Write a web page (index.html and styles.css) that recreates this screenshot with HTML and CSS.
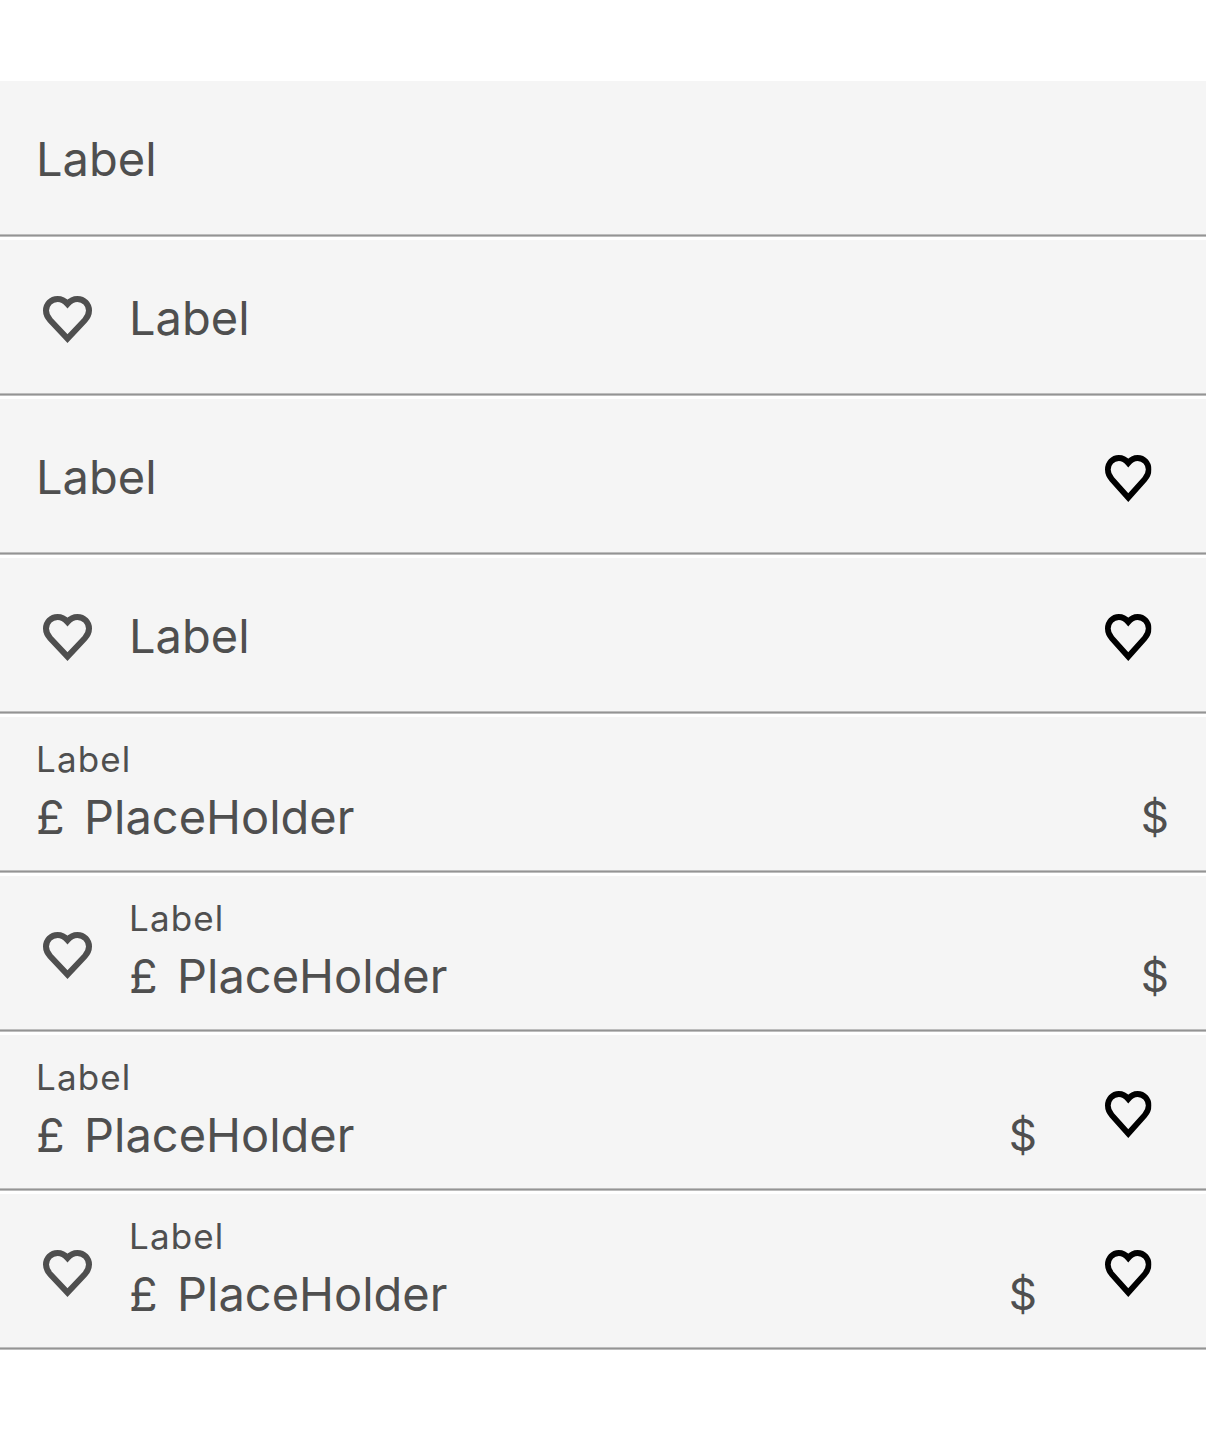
FILE: index.html
```
<!DOCTYPE html>
<html lang="en">
<head>
<meta charset="utf-8">
<title>Text fields</title>
<link rel="stylesheet" href="styles.css">
</head>
<body>
<svg class="defs" aria-hidden="true">
  <symbol id="heart" viewBox="0 0 49 47" preserveAspectRatio="none">
    <path d="M24.5 7.9C21.6 4.6 18.4 3 14.6 3C8 3 3 8.2 3 14.6C3 18.5 4.3 21.1 7.2 24.3L24.5 42.6L41.8 24.3C44.7 21.1 46 18.5 46 14.6C46 8.2 41 3 34.4 3C30.6 3 27.4 4.6 24.5 7.9Z" fill="none" stroke="currentColor" stroke-width="6"/>
  </symbol>
</svg>
<main class="fields">
  <div class="field"><span class="text">Label</span></div>
  <div class="field"><svg class="lead"><use href="#heart"/></svg><span class="text">Label</span></div>
  <div class="field"><span class="text">Label</span><svg class="trail"><use href="#heart"/></svg></div>
  <div class="field"><svg class="lead"><use href="#heart"/></svg><span class="text">Label</span><svg class="trail"><use href="#heart"/></svg></div>
  <div class="field">
    <div class="content"><span class="caption">Label</span><div class="line"><span class="prefix">£</span><span class="value">PlaceHolder</span><span class="suffix">$</span></div></div>
  </div>
  <div class="field">
    <svg class="lead"><use href="#heart"/></svg>
    <div class="content"><span class="caption">Label</span><div class="line"><span class="prefix">£</span><span class="value">PlaceHolder</span><span class="suffix">$</span></div></div>
  </div>
  <div class="field">
    <div class="content"><span class="caption">Label</span><div class="line"><span class="prefix">£</span><span class="value">PlaceHolder</span><span class="suffix">$</span></div></div>
    <svg class="trail"><use href="#heart"/></svg>
  </div>
  <div class="field">
    <svg class="lead"><use href="#heart"/></svg>
    <div class="content"><span class="caption">Label</span><div class="line"><span class="prefix">£</span><span class="value">PlaceHolder</span><span class="suffix">$</span></div></div>
    <svg class="trail"><use href="#heart"/></svg>
  </div>
</main>
</body>
</html>
```
FILE: styles.css
```
* { box-sizing: border-box; }
body {
  margin: 0;
  background: #fff;
  color: #4f4f4f;
  font-family: Inter, "Liberation Sans", sans-serif;
  font-size: 47px;
  line-height: 58px;
}
.defs { display: none; }
.fields {
  display: flex;
  flex-direction: column;
  gap: 3px;
  padding-top: 81px;
}
.field {
  display: flex;
  align-items: center;
  height: 156px;
  padding: 0 36px 3px;
  background: linear-gradient(#bdbdbd, #bdbdbd 1px, #949494 1px, #949494 2px, #bdbdbd 2px) bottom / 100% 3px no-repeat #f5f5f5;
}
.lead {
  flex: none;
  width: 49px;
  height: 47px;
  margin: 5px 37px 0 7px;
}
.trail {
  flex: none;
  width: 46.5px;
  height: 47px;
  margin: 5px 18.5px 0 67px;
  color: #000;
}
.text { flex: 1; margin-top: 3px; }
.content {
  flex: 1;
  display: flex;
  flex-direction: column;
}
.caption {
  font-size: 35px;
  line-height: 58px;
  letter-spacing: 1.1px;
  margin-top: -12px;
}
.line { display: flex; }
.prefix { width: 48px; }
.value { flex: 1; }
.suffix {
  font-size: 44px;
  line-height: 58px;
  padding-right: 1px;
}
```
